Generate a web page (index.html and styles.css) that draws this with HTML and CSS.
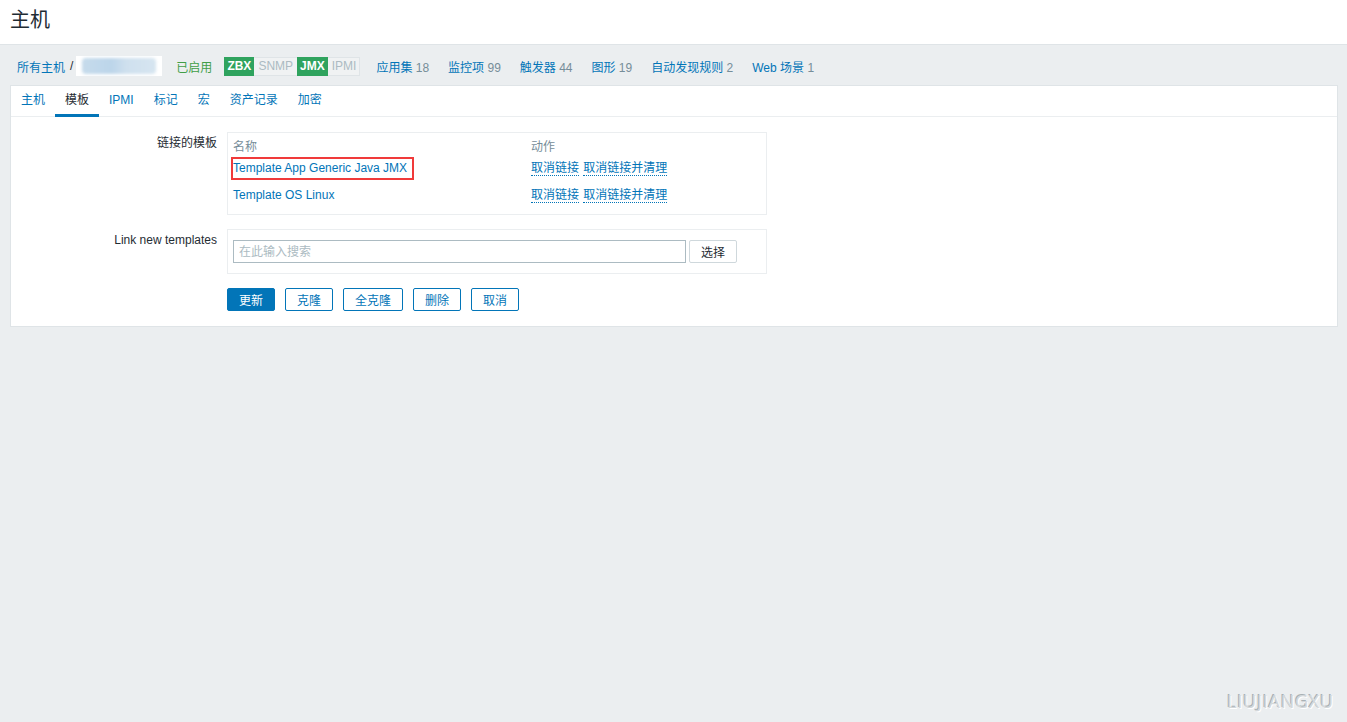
FILE: index.html
```html
<!DOCTYPE html>
<html lang="zh-CN">
<head>
  <meta charset="UTF-8">
  <title>主机</title>
  <link rel="stylesheet" href="styles.css">
</head>
<body>

<header class="page-header">
  <h1>主机</h1>
</header>

<div class="content">

  <!-- breadcrumb + host summary -->
  <div class="host-nav">
    <a class="link" href="#">所有主机</a>
    <span class="sep">/</span>
    <span class="host-name"><span class="blur"></span></span>
    <span class="status-on">已启用</span>
    <span class="avail">
      <span class="badge green">ZBX</span><span class="badge grey">SNMP</span><span class="badge green">JMX</span><span class="badge grey">IPMI</span>
    </span>
    <a class="link" href="#">应用集 <span class="count">18</span></a>
    <a class="link" href="#">监控项 <span class="count">99</span></a>
    <a class="link" href="#">触发器 <span class="count">44</span></a>
    <a class="link" href="#">图形 <span class="count">19</span></a>
    <a class="link" href="#">自动发现规则 <span class="count">2</span></a>
    <a class="link" href="#">Web 场景 <span class="count">1</span></a>
  </div>

  <div class="panel">
    <ul class="tabs">
      <li><a href="#">主机</a></li>
      <li class="active"><a href="#">模板</a></li>
      <li><a href="#">IPMI</a></li>
      <li><a href="#">标记</a></li>
      <li><a href="#">宏</a></li>
      <li><a href="#">资产记录</a></li>
      <li><a href="#">加密</a></li>
    </ul>

    <div class="form">
      <div class="form-row">
        <label class="form-label">链接的模板</label>
        <div class="form-field">
          <table class="linked">
            <tr>
              <th class="col-name">名称</th>
              <th>动作</th>
            </tr>
            <tr class="row-first">
              <td><span class="mark"><a class="link" href="#">Template App Generic Java JMX</a></span></td>
              <td><a class="dotted" href="#">取消链接</a> <a class="dotted" href="#">取消链接并清理</a></td>
            </tr>
            <tr class="row-second">
              <td><a class="link" href="#">Template OS Linux</a></td>
              <td><a class="dotted" href="#">取消链接</a> <a class="dotted" href="#">取消链接并清理</a></td>
            </tr>
          </table>
        </div>
      </div>

      <div class="form-row">
        <label class="form-label">Link new templates</label>
        <div class="form-field search-box">
          <input class="search" type="text" placeholder="在此输入搜索">
          <button class="btn-alt">选择</button>
        </div>
      </div>

      <div class="form-row">
        <div class="form-label"></div>
        <div class="buttons">
          <button class="btn-main">更新</button>
          <button class="btn-outline">克隆</button>
          <button class="btn-outline">全克隆</button>
          <button class="btn-outline">删除</button>
          <button class="btn-outline">取消</button>
        </div>
      </div>
    </div>
  </div>

</div>

<div class="watermark">LIUJIANGXU</div>

</body>
</html>
```

FILE: styles.css
```css
body {
  font-family: "Liberation Sans", Arial, "Noto Sans CJK SC", sans-serif;
  font-size: 12px;
  color: #1f2c33;
  margin: 0;
  padding: 0;
  background: #ebeef0;
  min-height: 722px;
}

a {
  text-decoration: none;
}

.page-header {
  background: #ffffff;
  border-bottom: 1px solid #dfe4e7;
  height: 44px;
  display: flex;
  align-items: center;
  padding: 0 10px;
}

.page-header h1 {
  margin: 0;
  font-size: 20px;
  font-weight: normal;
  line-height: 24px;
  color: #1f2c33;
  position: relative;
  top: -2px;
}

.content {
  padding: 0 9px 0 10px;
}

/* host summary line */
.host-nav {
  display: flex;
  align-items: center;
  height: 38px;
  padding-top: 2px;
  padding-left: 7px;
  white-space: nowrap;
}

.link {
  color: #0275b8;
}

.host-nav .link {
  margin-right: 19px;
}

.host-nav .link:first-child {
  margin-right: 0;
}

.count {
  color: #768d99;
}

.sep {
  margin: 0 3px 0 5px;
  color: #1f2c33;
}

.host-name {
  width: 86px;
  height: 20px;
  background: #ffffff;
  display: flex;
  align-items: center;
  justify-content: center;
  overflow: hidden;
  margin-right: 14px;
}

.blur {
  display: block;
  width: 74px;
  height: 16px;
  background: linear-gradient(90deg, #c6dbeb 0%, #bcd5ea 40%, #cfe0ee 60%, #d6e5f0 100%);
  filter: blur(1.5px);
  border-radius: 4px;
}

.status-on {
  color: #429e47;
  margin-right: 12px;
}

.avail {
  display: flex;
  margin-right: 16px;
}

.badge {
  display: inline-block;
  height: 17px;
  line-height: 17px;
  font-weight: bold;
  font-size: 12px;
}

.badge.green {
  background: #2fa35e;
  color: #ffffff;
  padding: 0 3px;
  border: 1px solid #2fa35e;
  border-left: none;
  border-right: none;
}

.badge.grey {
  background: #f0f2f3;
  color: #acbbc2;
  font-weight: normal;
  padding: 0 4px;
  border: 1px solid #dfe4e7;
  border-left: none;
  border-right: none;
}

.badge.grey:last-child {
  border-right: 1px solid #dfe4e7;
  padding-right: 3px;
}

/* main panel */
.panel {
  background: #ffffff;
  border: 1px solid #dfe4e7;
  padding-bottom: 15px;
}

.tabs {
  list-style: none;
  margin: 0;
  padding: 0;
  display: flex;
  border-bottom: 1px solid #ebeef0;
  height: 30px;
}

.tabs li a {
  display: block;
  padding: 0 10px;
  line-height: 28px;
  color: #0275b8;
  border-bottom: 3px solid transparent;
}

.tabs li.active a {
  color: #1f2c33;
  border-bottom-color: #0275b8;
}

.form {
  padding-top: 15px;
}

.form-row {
  display: flex;
  margin-bottom: 14px;
}

.form-row:last-child {
  margin-bottom: 0;
}

.form-label {
  width: 206px;
  text-align: right;
  padding-right: 10px;
  padding-top: 4px;
  line-height: 14px;
  flex-shrink: 0;
}

.form-field {
  border: 1px solid #ebeef0;
  width: 528px;
  padding: 3px 5px 5px 5px;
}

.linked {
  border-collapse: collapse;
  width: 100%;
}

.linked th {
  text-align: left;
  font-weight: normal;
  color: #768d99;
  line-height: 14px;
  height: 20px;
  box-sizing: border-box;
  padding: 4px 0 2px 0;
}

.linked .col-name {
  width: 298px;
}

.linked td {
  padding: 0;
  line-height: 16px;
  vertical-align: middle;
}

.row-first td {
  height: 24px;
}

.row-second td {
  height: 29px;
}

.dotted {
  color: #0275b8;
  border-bottom: 1px dotted #0275b8;
  margin-right: 1px;
}

.mark {
  display: inline-block;
  vertical-align: middle;
  border: 2px solid #f03a3a;
  margin-left: -2px;
  padding: 2px 5px 2px 0;
  line-height: 15px;
}

.search-box {
  display: flex;
  align-items: center;
  padding: 10px 5px 10px 5px;
}

.search {
  width: 453px;
  height: 23px;
  box-sizing: border-box;
  border: 1px solid #acbbc2;
  padding: 0 5px;
  font-family: inherit;
  font-size: 12px;
  color: #1f2c33;
  margin: 0 3px 0 0;
}

.search::placeholder {
  color: #acbbc2;
}

button {
  font-family: inherit;
  font-size: 12px;
  height: 23px;
  padding: 0 11px;
  cursor: pointer;
  margin: 0;
  box-sizing: border-box;
}

.btn-alt {
  width: 48px;
  padding: 0;
  background: #ffffff;
  border: 1px solid #cfd8dc;
  color: #1f2c33;
  border-radius: 2px;
}

.buttons {
  display: flex;
  gap: 10px;
}

.btn-main {
  background: #0275b8;
  color: #ffffff;
  border: 1px solid #0275b8;
  border-radius: 2px;
  min-width: 48px;
}

.btn-outline {
  background: #ffffff;
  color: #0275b8;
  border: 1px solid #0275b8;
  border-radius: 2px;
  min-width: 48px;
}

.watermark {
  position: absolute;
  right: 13px;
  top: 689px;
  font-family: "Open Sans", sans-serif;
  font-size: 18px;
  letter-spacing: 0.8px;
  color: #d3d7da;
  text-shadow: 1px 1px 0 #ffffff, -1px -1px 0 #a9b1b5;
}
```
